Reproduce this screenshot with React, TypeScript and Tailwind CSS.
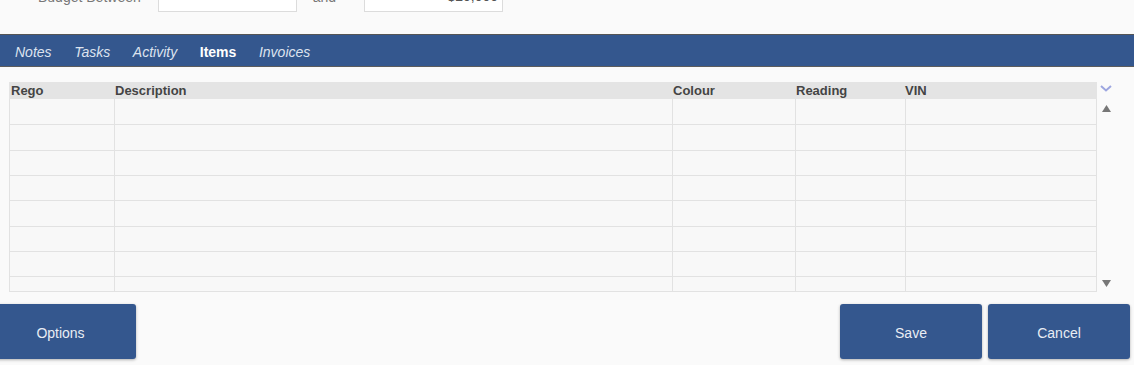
import React from "react";

const rows = [
  "h-[26px]",
  "h-[26px]",
  "h-[25px]",
  "h-[25px]",
  "h-[26px]",
  "h-[25px]",
  "h-[25px]",
  "h-[15px]",
];

const cols = "grid grid-cols-[105px_558px_123px_110px_190px]";

export default function App() {
  return (
    <div className="w-[1134px] h-[365px] overflow-hidden bg-[#fafafa] font-['Liberation_Sans',Arial,sans-serif] flex flex-col">
      {/* filter row (cut off at top) */}
      <div className="h-[34px] shrink-0 flex flex-col">
        <div className="-mt-[19px] flex items-center h-[31px]">
          <span className="ml-[38px] mt-[1px] text-[14px] leading-[16px] text-[#777]">Budget Between</span>
          <div className="ml-[17px] w-[139px] h-[31px] bg-white border border-[#dcdcdc]" />
          <span className="ml-[16px] mt-[1px] text-[14px] leading-[16px] text-[#777]">and</span>
          <div className="ml-[28px] w-[139px] h-[31px] bg-white border border-[#dcdcdc] flex items-center justify-end pr-[4px] text-[14px] text-[#555]">
            $20,000
          </div>
        </div>
      </div>

      {/* tab bar */}
      <div className="h-[33px] shrink-0 bg-[#34578e] border-t border-t-[#555] border-b border-b-[#5c5c5c] flex items-center pl-[15px] pt-[3px] gap-[22.6px] text-[14px] leading-[16px]">
        <span className="italic text-[#dde3ee]">Notes</span>
        <span className="italic text-[#dde3ee]">Tasks</span>
        <span className="italic text-[#dde3ee]">Activity</span>
        <span className="font-bold text-white">Items</span>
        <span className="italic text-[#dde3ee]">Invoices</span>
      </div>

      {/* table */}
      <div className="mt-[15px] ml-[9px] flex shrink-0">
        <div className="w-[1088px]">
          <div className={`${cols} h-[17px] bg-[#e4e4e4] px-[1px] text-[13px] leading-[17px] font-bold text-[#444]`}>
            <div className="pl-[1px]">Rego</div>
            <div>Description</div>
            <div>Colour</div>
            <div>Reading</div>
            <div className="-ml-[1px]">VIN</div>
          </div>
          <div className="border-x border-[#e2e2e2] bg-[#f8f8f8]">
            {rows.map((h, i) => (
              <div key={i} className={`${cols} ${h} border-b border-[#e2e2e2]`}>
                <div className="border-r border-[#e2e2e2]" />
                <div className="border-r border-[#e2e2e2]" />
                <div className="border-r border-[#e2e2e2]" />
                <div className="border-r border-[#e2e2e2]" />
                <div />
              </div>
            ))}
          </div>
        </div>
        <div className="w-[17px] h-[210px] flex flex-col items-center pl-[1px]">
          <svg width="12" height="7" viewBox="0 0 12 7" className="mt-[3px]">
            <polyline points="1,1 6,5.5 11,1" fill="none" stroke="#9da6e0" strokeWidth="2" />
          </svg>
          <svg width="9" height="7" viewBox="0 0 9 7" className="mt-[13px]">
            <polygon points="4.5,0 9,7 0,7" fill="#777" />
          </svg>
          <svg width="9" height="7" viewBox="0 0 9 7" className="mt-auto mb-[5px]">
            <polygon points="0,0 9,0 4.5,7" fill="#777" />
          </svg>
        </div>
      </div>

      {/* buttons */}
      <div className="mt-[12px] flex shrink-0">
        <button className="-ml-[15px] w-[151px] h-[55px] pt-[3px] rounded-[3px] bg-[#34578e] text-[#e9edf4] text-[14px] shadow-[0_1px_3px_rgba(0,0,0,0.3)]">
          Options
        </button>
        <button className="ml-auto w-[142px] h-[55px] pt-[3px] rounded-[3px] bg-[#34578e] text-[#e9edf4] text-[14px] shadow-[0_1px_3px_rgba(0,0,0,0.3)]">
          Save
        </button>
        <button className="ml-[6px] mr-[4px] w-[142px] h-[55px] pt-[3px] rounded-[3px] bg-[#34578e] text-[#e9edf4] text-[14px] shadow-[0_1px_3px_rgba(0,0,0,0.3)]">
          Cancel
        </button>
      </div>
    </div>
  );
}
